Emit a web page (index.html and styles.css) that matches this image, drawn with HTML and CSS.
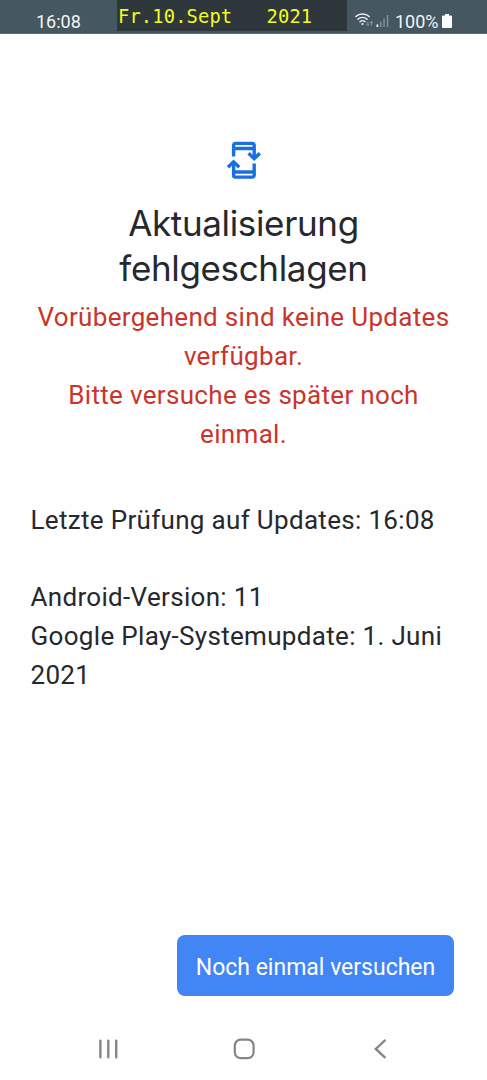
FILE: index.html
```html
<!DOCTYPE html>
<html lang="de">

<head>
    <meta charset="UTF-8">
    <meta name="viewport" content="width=device-width, initial-scale=1.0">
    <title>Systemupdate</title>
    <link rel="stylesheet" href="styles.css">
</head>

<body>
    <header class="status-bar">
        <span class="clock">16:08</span>
        <div class="date-box">Fr.10.Sept   2021</div>
        <div class="status-icons">
            <svg class="wifi" width="20" height="16" viewBox="0 0 20 16" fill="none" stroke="#f2f5f6" stroke-width="1.4" stroke-linecap="round">
                <path d="M.8 4.6C4.5 1.2 10.5 1.2 14.2 4.6" />
                <path d="M2.9 7.2C5.5 4.8 9.5 4.8 12.1 7.2" />
                <path d="M5 9.7C6.5 8.4 8.5 8.4 10 9.7" />
                <circle cx="7.5" cy="12" r="1.1" fill="#f2f5f6" stroke="none" />
                <path d="M12.9 10v3.5M11.6 12.3l1.3 1.2 1.3-1.2M16.6 13.2V9.5M15.3 10.7l1.3-1.2 1.3 1.2" stroke="#8b989e" stroke-width="1" />
            </svg>
            <svg class="signal" width="14" height="14" viewBox="0 0 14 14">
                <rect x="0.5" y="10.5" width="1.8" height="2.5" fill="#f2f5f6" />
                <path d="M4 7.5h1.5V13H4zM7.3 4.5h1.5V13H7.3zM10.8 1h1.5v12h-1.5z" fill="#82929a" />
            </svg>
            <span class="percent">100%</span>
            <svg class="battery" width="10" height="14" viewBox="0 0 10 14">
                <path d="M3 0h4v1.5h2a1 1 0 0 1 1 1V13a1 1 0 0 1-1 1H1a1 1 0 0 1-1-1V2.5a1 1 0 0 1 1-1h2z" fill="#fafafa" />
            </svg>
        </div>
    </header>

    <main>
        <svg class="update-icon" width="34" height="40" viewBox="0 0 34 40" fill="none" stroke="#1b6fe0" stroke-width="3.4">
            <path d="M6.6 16.6V5.2a1.8 1.8 0 0 1 1.8-1.8h17a1.8 1.8 0 0 1 1.8 1.8V18M6.6 8.5h20.6" />
            <path d="M27.2 23.5v11.8a1.8 1.8 0 0 1-1.8 1.8h-17a1.8 1.8 0 0 1-1.8-1.8V22M6.6 32h20.6" />
            <path d="M21.6 13.2l5.6 5.4 5.6-5.4M1 27.2l5.6-5.4 5.6 5.4" />
        </svg>
        <h1>Aktualisierung fehlgeschlagen</h1>
        <p class="error">Vorübergehend sind keine Updates verfügbar.<br>Bitte versuche es später noch einmal.</p>
        <p class="info">Letzte Prüfung auf Updates: 16:08</p>
        <p class="info">Android-Version: 11<br>Google Play-Systemupdate: 1. Juni 2021</p>
    </main>

    <div class="actions">
        <button class="btn">Noch einmal versuchen</button>
    </div>

    <nav class="nav-bar">
        <svg width="24" height="24" viewBox="0 0 24 24" fill="none" stroke="#858585" stroke-width="2.4" stroke-linecap="round">
            <path d="M4.4 3.8v16.4M12.3 3.8v16.4M20.2 3.8v16.4" />
        </svg>
        <svg width="24" height="24" viewBox="0 0 24 24" fill="none" stroke="#858585" stroke-width="2.2">
            <rect x="2.8" y="2.6" width="18.8" height="18.6" rx="6" />
        </svg>
        <svg width="24" height="24" viewBox="0 0 24 24" fill="none" stroke="#858585" stroke-width="2.4" stroke-linecap="round">
            <path d="M16.8 3.5L7.8 12l9 8.3" />
        </svg>
    </nav>
</body>

</html>
```
FILE: styles.css
```css
* {
    margin: 0;
    padding: 0;
    box-sizing: border-box;
}

body {
    height: 1080px;
    display: flex;
    flex-direction: column;
    font-family: Roboto, sans-serif;
    color: #26282c;
    background: #fefefe;
    overflow: hidden;
}

/* Status bar */
.status-bar {
    display: flex;
    height: 34px;
    background: #455760;
    border-bottom: 1px solid #5c6b73;
    color: #f2f5f6;
    font-size: 18px;
}

.clock {
    width: 117px;
    padding: 11px 0 0 36px;
    line-height: 21px;
}

.date-box {
    width: 230px;
    height: 31px;
    padding-left: 1px;
    background: #2d373c;
    color: #f3fb22;
    font: 18.8px/34px "DejaVu Sans Mono", monospace;
    letter-spacing: 0.12px;
    white-space: pre;
}

.status-icons {
    display: flex;
    padding: 11px 0 0 8px;
    line-height: 21px;
}

.wifi {
    margin-top: 1px;
}

.signal {
    margin: 3px 0 0 1px;
}

.percent {
    margin-left: 5px;
}

.battery {
    margin: 3px 0 0 3px;
}

/* Content */
main {
    flex: 1;
    padding: 106px 30px 0;
    font-size: 26px;
    line-height: 38.8px;
    letter-spacing: 0.32px;
}

.update-icon {
    display: block;
    margin: 0 auto;
}

h1 {
    margin-top: 21px;
    font: 400 35px/45px Inter, sans-serif;
    letter-spacing: -0.35px;
    text-align: center;
}

.error {
    margin: 7.4px 0 47px;
    color: #c9352b;
    text-align: center;
}

.info {
    margin: 0 0 38.8px 0.5px;
}

/* Button */
.actions {
    padding: 0 33px;
    text-align: right;
}

.btn {
    width: 277px;
    height: 61px;
    padding-top: 3px;
    border: none;
    border-radius: 8px;
    background: #4285f4;
    color: #ffffff;
    font: 23px Roboto, sans-serif;
}

/* Navigation bar */
.nav-bar {
    display: flex;
    justify-content: space-between;
    height: 84px;
    padding: 41px 95px 0 96px;
}
```
